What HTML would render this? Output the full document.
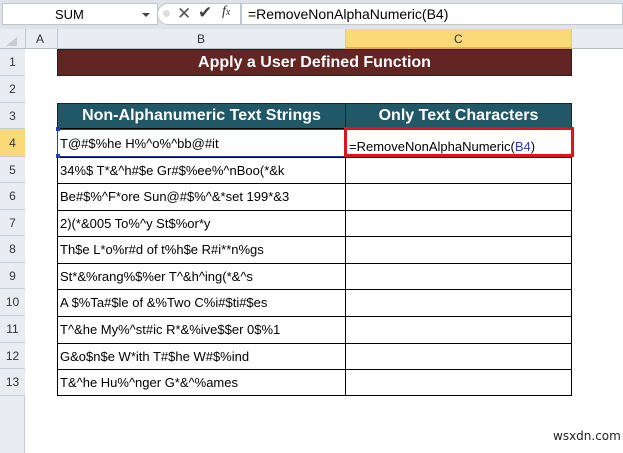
<!DOCTYPE html>
<html><head><style>
*{margin:0;padding:0;box-sizing:border-box}
body{width:623px;height:453px;background:#fff;position:relative;overflow:hidden;font-family:"Liberation Sans",Calibri,sans-serif}
.a{position:absolute}
.t{font-size:13px;color:#000;white-space:nowrap}
.rh{position:absolute;left:0;width:25px;text-align:center;font-size:12px;color:#333;background:#e9ecf0;border-bottom:1px solid #c5cbd3}
</style></head><body>
<!-- formula bar -->
<div class="a" style="left:0;top:0;width:623px;height:29px;background:#dfe3e8"></div>
<div class="a" style="left:2px;top:3px;width:156px;height:22px;background:#fff;border:1px solid #c0c6ce"></div>
<div class="a t" style="left:55px;top:7px;font-size:13px">SUM</div>
<div class="a" style="left:142px;top:13px;border-left:4px solid transparent;border-right:4px solid transparent;border-top:4px solid #444"></div>
<div class="a" style="left:157px;top:3px;width:84px;height:22px;background:#fff;border:1px solid #c0c6ce;border-radius:11px 0 0 11px"></div>
<div class="a" style="left:163px;top:10px;width:7px;height:7px;border-radius:50%;background:#ddd"></div>
<div class="a" style="left:177px;top:4px;font-size:17px;color:#555">✕</div>
<div class="a" style="left:198px;top:3px;font-size:17px;color:#444">✔</div>
<div class="a" style="left:222px;top:4px;font-size:14px;font-style:italic;font-family:'Liberation Serif',serif;color:#333">f<span style="font-size:10px">x</span></div>
<div class="a" style="left:241px;top:3px;width:382px;height:22px;background:#fff;border:1px solid #c0c6ce"></div>
<div class="a t" style="left:248px;top:6px;font-size:14px">=RemoveNonAlphaNumeric(B4)</div>
<!-- col headers -->
<div class="a" style="left:0;top:29px;width:623px;height:20px;background:#e9ecf0;border-bottom:1px solid #b8bec6"></div>
<div class="a" style="left:6px;top:37px;border-left:11px solid transparent;border-bottom:9px solid #c8ccd2"></div>
<div class="a" style="left:25px;top:29px;width:1px;height:20px;background:#c5cbd3"></div>
<div class="a" style="left:57px;top:29px;width:1px;height:20px;background:#c5cbd3"></div>
<div class="a" style="left:345px;top:29px;width:227px;height:20px;background:#f9d978;border-left:1px solid #c5cbd3;border-right:1px solid #c5cbd3;border-bottom:2px solid #e2b04a"></div>
<div class="a t" style="left:36px;top:32px;font-size:12px;color:#333">A</div>
<div class="a t" style="left:197px;top:32px;font-size:12px;color:#333">B</div>
<div class="a t" style="left:454px;top:32px;font-size:12px;color:#333">C</div>
<!-- row headers -->
<div class="a" style="left:0;top:49px;width:25px;height:404px;background:#e9ecf0;border-right:1px solid #c5cbd3"></div>
<div class="rh" style="top:49px;height:27px;line-height:27px">1</div>
<div class="rh" style="top:76px;height:27px;line-height:27px">2</div>
<div class="rh" style="top:103px;height:26px;line-height:26px">3</div>
<div class="rh" style="top:129px;height:28px;line-height:28px;background:#f9d978;color:#333">4</div>
<div class="rh" style="top:157px;height:26px;line-height:26px">5</div>
<div class="rh" style="top:183px;height:27px;line-height:27px">6</div>
<div class="rh" style="top:210px;height:26px;line-height:26px">7</div>
<div class="rh" style="top:236px;height:27px;line-height:27px">8</div>
<div class="rh" style="top:263px;height:26px;line-height:26px">9</div>
<div class="rh" style="top:289px;height:27px;line-height:27px">10</div>
<div class="rh" style="top:316px;height:27px;line-height:27px">11</div>
<div class="rh" style="top:343px;height:26px;line-height:26px">12</div>
<div class="rh" style="top:369px;height:27px;line-height:27px">13</div>
<!-- title -->
<div class="a" style="left:57px;top:49px;width:515px;height:27px;background:#632523;border:1px solid #222;color:#fff;font-weight:bold;font-size:16px;text-align:center;line-height:25px">Apply a User Defined Function</div>
<!-- table header -->
<div class="a" style="left:57px;top:103px;width:289px;height:26px;background:#215867;border:1px solid #222;color:#fff;font-weight:bold;font-size:16px;text-align:center;line-height:24px">Non-Alphanumeric Text Strings</div>
<div class="a" style="left:345px;top:103px;width:227px;height:26px;background:#215867;border:1px solid #222;color:#fff;font-weight:bold;font-size:16px;text-align:center;line-height:24px">Only Text Characters</div>
<!-- body -->
<div class="a" style="left:57px;top:128px;width:515px;height:268px;border:1px solid #000"></div>
<div class="a" style="left:345px;top:128px;width:1px;height:268px;background:#000"></div>
<div class="a" style="left:57px;top:157px;width:515px;height:1px;background:#000"></div>
<div class="a" style="left:57px;top:183px;width:515px;height:1px;background:#000"></div>
<div class="a" style="left:57px;top:210px;width:515px;height:1px;background:#000"></div>
<div class="a" style="left:57px;top:236px;width:515px;height:1px;background:#000"></div>
<div class="a" style="left:57px;top:263px;width:515px;height:1px;background:#000"></div>
<div class="a" style="left:57px;top:289px;width:515px;height:1px;background:#000"></div>
<div class="a" style="left:57px;top:316px;width:515px;height:1px;background:#000"></div>
<div class="a" style="left:57px;top:343px;width:515px;height:1px;background:#000"></div>
<div class="a" style="left:57px;top:369px;width:515px;height:1px;background:#000"></div>
<div class="a" style="left:57px;top:129px;width:289px;height:28px;border:1px solid #1f3fb5"></div>
<div class="a" style="left:56px;top:127px;width:4px;height:4px;background:#1f3fb5"></div>
<div class="a" style="left:56px;top:154px;width:4px;height:4px;background:#1f3fb5"></div>
<div class="a t" style="left:60px;top:136px">T@#$%he H%^o%^bb@#it</div>
<div class="a t" style="left:60px;top:163px">34%$ T*&amp;^h#$e Gr#$%ee%^nBoo(*&amp;k</div>
<div class="a t" style="left:60px;top:189px">Be#$%^F*ore Sun@#$%^&amp;*set 199*&amp;3</div>
<div class="a t" style="left:60px;top:216px">2)(*&amp;005 To%^y St$%or*y</div>
<div class="a t" style="left:60px;top:242px">Th$e L*o%r#d of t%h$e R#i**n%gs</div>
<div class="a t" style="left:60px;top:269px">St*&amp;%rang%$%er T^&amp;h^ing(*&amp;^s</div>
<div class="a t" style="left:60px;top:295px">A $%Ta#$le of &amp;%Two C%i#$ti#$es</div>
<div class="a t" style="left:60px;top:322px">T^&amp;he My%^st#ic R*&amp;%ive$$er 0$%1</div>
<div class="a t" style="left:60px;top:349px">G&amp;o$n$e W*ith T#$he W#$%ind</div>
<div class="a t" style="left:60px;top:375px">T&amp;^he Hu%^nger G*&amp;^%ames</div>
<div class="a" style="left:344px;top:127px;width:230px;height:30px;border:3px solid #e0121b"></div>
<div class="a t" style="left:349px;top:139px">=RemoveNonAlphaNumeric(<span style="color:#2a3fc9">B4</span>)</div>
<div class="a" style="left:553px;top:429px;font-size:12px;color:#222;font-family:'DejaVu Sans',sans-serif">wsxdn.com</div>
</body></html>
